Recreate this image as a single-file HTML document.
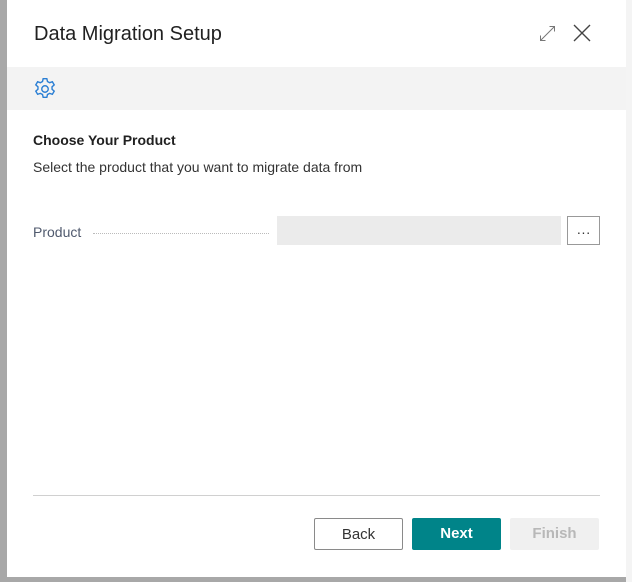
<!DOCTYPE html>
<html><head><style>
body{margin:0;width:632px;height:582px;background:#a8a8a8;position:relative;overflow:hidden;font-family:"Liberation Sans",sans-serif;}
.rs{position:absolute;left:626px;top:0;width:6px;height:582px;background:#f4f4f4;}
.dlg{position:absolute;left:7px;top:0;width:619px;height:577px;background:#fff;}
.t{position:absolute;left:27px;top:23px;font-size:20px;color:#212121;}
.bar{position:absolute;left:0;top:67px;width:619px;height:43px;background:#f3f3f3;}
.h{position:absolute;left:26px;top:132px;font-size:14px;font-weight:bold;color:#212121;}
.s{position:absolute;left:26px;top:159px;font-size:14px;color:#333;}
.pl{position:absolute;left:26px;top:224px;font-size:14px;color:#505a6e;}
.dots{position:absolute;left:86px;top:233px;width:176px;border-top:1px dotted #bbb;}
.inp{position:absolute;left:270px;top:216px;width:284px;height:29px;background:#ebebeb;}
.el{position:absolute;left:560px;top:216px;width:31px;height:27px;border:1px solid #999;text-align:center;font-size:14px;line-height:30px;color:#333;}
.hr{position:absolute;left:26px;top:495px;width:567px;border-top:1px solid #d0d0d0;}
.b{position:absolute;top:518px;height:32px;width:89px;text-align:center;line-height:32px;font-size:15px;box-sizing:border-box;border-radius:2px;}
</style></head><body>
<div class="rs"></div>
<div class="dlg">
<div class="t">Data Migration Setup</div>
<svg style="position:absolute;left:532px;top:25px" width="17" height="17" viewBox="0 0 17 17" fill="none" stroke="#777" stroke-width="1"><path d="M1.5 15.5L15.5 1.5M10.5 1.5h5v5M1.5 10.5v5h5"/></svg>
<svg style="position:absolute;left:566px;top:24px" width="18" height="18" viewBox="0 0 18 18" stroke="#444" stroke-width="1.4"><path d="M1 1L17 17M17 1L1 17"/></svg>
<div class="bar"><svg style="position:absolute;left:25px;top:9px" width="26" height="26" viewBox="0 0 24 24" fill="none" stroke="#2b7fd4" stroke-width="1.3"><circle cx="12" cy="12" r="3"/><path d="M10.3 2.5h3.4l.6 2.6 2 1.1 2.5-.9 1.7 2.9-2 1.8v2.2l2 1.8-1.7 2.9-2.5-.9-2 1.1-.6 2.6h-3.4l-.6-2.6-2-1.1-2.5.9-1.7-2.9 2-1.8v-2.2l-2-1.8 1.7-2.9 2.5.9 2-1.1z"/></svg></div>
<div class="h">Choose Your Product</div>
<div class="s">Select the product that you want to migrate data from</div>
<div class="pl">Product</div><div class="dots"></div>
<div class="inp"></div><div class="el">···</div>
<div class="hr"></div>
<div class="b" style="left:307px;border:1px solid #8a8a8a;color:#333">Back</div>
<div class="b" style="left:405px;background:#008489;color:#fff;font-weight:bold">Next</div>
<div class="b" style="left:503px;background:#f0f0f0;color:#b8b8b8;font-weight:bold">Finish</div>
</div>
</body></html>
